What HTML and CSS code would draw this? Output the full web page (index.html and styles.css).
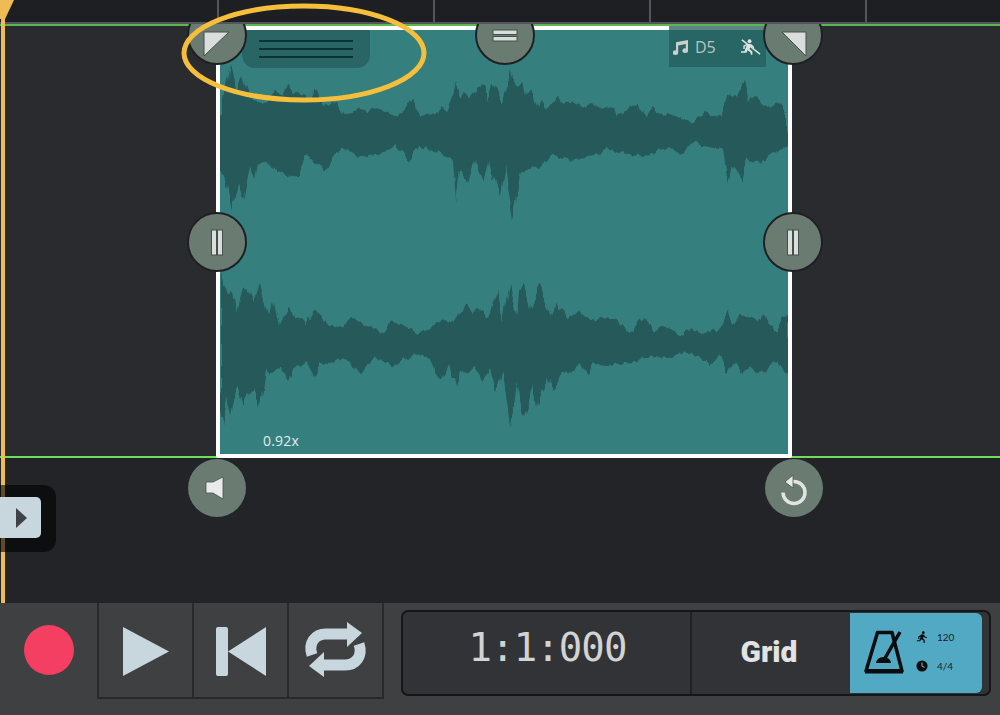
FILE: index.html
```html
<!DOCTYPE html>
<html lang="en">
  <head>
    <meta charset="UTF-8" />
    <meta name="viewport" content="width=device-width, initial-scale=1.0" />
    <title>Audio clip editor</title>
    <link rel="stylesheet" href="styles.css">
  </head>
  <body>
    <div class="stage">
      <div class="ruler">
        <div class="bar"></div>
        <div class="bar"></div>
        <div class="bar"></div>
        <div class="bar"></div>
      </div>

      <div class="tracks">
        <div class="lane">
          <div class="clip">
            <!-- waveform, coordinates are page pixels -->
            <svg class="wave" viewBox="220 30 568 425" preserveAspectRatio="none">
              <filter id="rough" x="0" y="0" width="1" height="1">
                <feTurbulence type="fractalNoise" baseFrequency="0.16 0.02" numOctaves="2" seed="4" />
                <feDisplacementMap in="SourceGraphic" scale="9" xChannelSelector="A" yChannelSelector="G" />
              </filter>
              <g filter="url(#rough)">
                <polygon points="220,97 225,93 230,63 237,93 243,75 250,98 265,105 275,92 282,95 287,82 293,95 303,93 310,102 316,88 323,105 337,102 343,115 360,108 367,113 377,108 387,112 397,118 412,100 420,115 437,113 441,104 447,113 455,83 460,98 465,93 470,100 478,87 485,87 488,103 493,83 503,103 510,67 517,88 523,82 526,97 532,88 537,108 542,100 547,110 558,97 563,105 570,102 575,103 585,108 590,104 600,107 613,108 617,117 632,105 638,104 645,117 652,107 662,115 672,113 690,122 708,113 720,118 727,95 737,97 743,78 748,100 757,95 763,108 780,103 788,118 788,147 773,153 760,163 748,160 743,183 733,165 728,183 723,150 707,147 690,142 683,155 667,147 647,157 637,155 617,153 607,147 600,155 570,160 553,155 537,167 520,173 513,223 505,163 500,197 490,163 485,182 475,162 468,182 460,170 456,203 453,160 437,153 420,146 408,162 395,145 383,153 370,155 357,157 345,148 337,153 325,170 313,163 307,153 298,175 288,177 277,173 270,163 258,162 255,178 250,167 243,200 238,185 232,213 225,175 220,170" />
                <polygon points="220,273 228,297 232,292 237,312 243,287 248,290 253,303 259,283 265,310 268,317 274,303 279,327 289,307 293,319 302,318 307,325 315,310 325,322 335,329 355,318 367,327 383,333 389,322 402,325 417,335 425,330 443,320 452,323 457,317 467,305 473,315 478,307 488,318 497,290 503,320 509,283 517,315 519,292 524,283 530,310 539,284 550,318 558,303 567,320 578,312 590,323 603,318 613,319 632,333 645,317 652,332 660,327 683,337 690,330 707,335 720,328 727,312 732,327 739,313 747,317 758,322 763,313 775,333 787,315 788,315 788,375 786,375 777,360 762,375 750,367 742,375 735,363 728,374 720,357 711,367 703,358 685,353 670,358 657,357 643,358 637,363 607,368 593,363 588,375 578,363 568,375 560,372 553,390 547,377 538,408 533,385 523,417 516,382 510,427 503,373 496,393 490,370 482,383 473,368 468,373 460,373 456,387 450,363 443,380 437,377 430,360 415,355 393,367 373,357 361,374 353,365 338,358 327,367 320,363 313,377 305,362 293,370 289,382 280,366 272,373 265,372 260,406 253,388 243,407 237,385 231,417 227,397 223,425 220,413" />
              </g>
            </svg>

            <div class="grip">
              <span></span>
              <span></span>
              <span></span>
            </div>

            <div class="tag">
              <svg class="note-icon" viewBox="2 0 16 16">
                <path d="M5 3.200 17 1v10.600a2.800 2.300 0 1 1-2.200-2.200V5L7.200 6.400v7.200a2.800 2.300 0 1 1-2.200-2.200z" />
              </svg>
              <span class="tag-name">D5</span>
              <svg class="nostretch-icon" viewBox="0 0 22 18">
                <circle cx="10" cy="3" r="2" />
                <path d="M8 5.500 12 6l3 3-1 1.200-3-2-1 3 3 2.500V17h-1.600l-.6-2.600-3-2-1 2.600H1v-1.500h3.600L7 7.500l-2 1V11H3.500V7.500z" />
                <path class="slash" d="M2 1.500 21 16.500" />
              </svg>
            </div>

            <div class="speed">0.92x</div>
          </div>
        </div>
        <div class="lane-empty"></div>

        <div class="handle top-left">
          <svg viewBox="0 0 60 60"><polygon class="ico" points="17,27 42,27 17,51" /></svg>
        </div>
        <div class="handle top-mid">
          <svg viewBox="0 0 60 60">
            <rect class="ico" x="18" y="25" width="24" height="4.500" />
            <rect class="ico" x="18" y="31.500" width="24" height="4.500" />
          </svg>
        </div>
        <div class="handle top-right">
          <svg viewBox="0 0 60 60"><polygon class="ico" points="19,27 43,27 43,51" /></svg>
        </div>
        <div class="handle mid-left">
          <svg viewBox="0 0 60 60">
            <rect class="ico" x="24.500" y="18" width="5" height="25" />
            <rect class="ico" x="30.500" y="18" width="5" height="25" />
          </svg>
        </div>
        <div class="handle mid-right">
          <svg viewBox="0 0 60 60">
            <rect class="ico" x="24.500" y="18" width="5" height="25" />
            <rect class="ico" x="30.500" y="18" width="5" height="25" />
          </svg>
        </div>
        <div class="handle plain bottom-left">
          <svg viewBox="0 0 58 58">
            <path class="white" d="M18 23h7l10-5v22l-10-6h-7z" />
          </svg>
        </div>
        <div class="handle plain bottom-right">
          <svg viewBox="0 0 58 58">
            <path class="undo" d="M27 22.500h2a11 11 0 1 1-11 11" />
            <polygon class="white" points="20,23 28,16 28,29" />
          </svg>
        </div>
      </div>

      <div class="playhead"></div>
      <svg class="circled" viewBox="0 0 250 104">
        <ellipse cx="125" cy="52" rx="120" ry="47" />
      </svg>
      <div class="drawer">
        <div class="drawer-btn"></div>
      </div>
    </div>

    <div class="transport">
      <div class="rec-wrap"><div class="rec"></div></div>
      <div class="buttons">
        <div class="tbtn">
          <svg viewBox="0 0 95 95"><polygon class="glyph" points="24,24 70,48.500 24,73" /></svg>
        </div>
        <div class="tbtn">
          <svg viewBox="0 0 95 95">
            <rect class="glyph" x="22" y="24" width="12" height="49" rx="2" />
            <polygon class="glyph" points="72,24 72,73 34,48.500" />
          </svg>
        </div>
        <div class="tbtn">
          <svg viewBox="0 0 95 95">
            <g>
              <path class="loop-line" d="M23 52c-4-12 3-21 14-21h22" />
              <polygon class="glyph" points="58,19 73,30 58,44" />
            </g>
            <g transform="rotate(180 46.500 46.500)">
              <path class="loop-line" d="M23 52c-4-12 3-21 14-21h22" />
              <polygon class="glyph" points="58,19 73,30 58,44" />
            </g>
          </svg>
        </div>
      </div>

      <div class="display">
        <div class="time">1:1:000</div>
        <div class="grid-btn">Grid</div>
        <div class="tempo">
          <svg class="metronome" viewBox="0 0 40 46">
            <path class="metro-line" d="M13.500 2.500H28L38 41H2z" />
            <path class="metro-line" d="M20.500 29 36 2" />
            <path class="metro-fill" d="M12 33a7.500 6 0 0 1 15 0z" />
            <path class="metro-fill" d="M1 39h38v4.500H1z" />
          </svg>
          <div class="tempo-info">
            <div class="tempo-row">
              <svg class="small-icon" viewBox="0 0 14 14">
                <circle cx="8.500" cy="2" r="1.600" />
                <path d="M6.500 3.800 9.500 4.500l1 2 2.500.8-.4 1.100-3-1-.6-1-.8 2.300 2 1.700V14h-1.400v-2.800L6 9.500 5 12H1v-1.300h3l1.500-4.200-1.500.7V9.300H2.700V6.300z" />
              </svg>
              <span>120</span>
            </div>
            <div class="tempo-row">
              <svg class="small-icon" viewBox="0 0 14 14">
                <path fill-rule="evenodd" d="M7 .5a6.500 6.500 0 1 0 0 13 6.500 6.500 0 0 0 0-13zM6.300 3h1.400v3.700l2.600 1.600-.7 1.100-3.300-2z" />
              </svg>
              <span>4/4</span>
            </div>
          </div>
        </div>
      </div>
    </div>
  </body>
</html>
```

FILE: styles.css
```css
* {
  box-sizing: border-box;
}

html,
body {
  margin: 0;
  height: 715px;
  overflow: hidden;
}

body {
  display: flex;
  flex-direction: column;
  background-color: #222428;
  font-family: "Lato", "Liberation Sans", sans-serif;
}

svg {
  display: block;
}

/* top part */
.stage {
  position: relative;
  height: 603px;
  flex: none;
}

.ruler {
  display: flex;
  height: 24px;
  padding-left: 217px;
  background-color: #1e1f23;
  border-bottom: 2px solid #54555a;
}

.bar {
  width: 216px;
  flex: none;
  border-left: 2px solid #54555a;
}

.bar:last-child {
  width: 135px;
}

.tracks {
  position: relative;
  height: 579px;
  overflow: hidden;
}

.lane {
  height: 434px;
  padding-left: 216px;
  background-color: #2a2b2f;
  border-top: 2px solid #5cb84e;
  border-bottom: 2px solid #6fdd5e;
}

.lane-empty {
  height: 145px;
  background-color: #222428;
}

.clip {
  position: relative;
  width: 576px;
  height: 432px;
  background-color: #35807f;
  border: 4px solid #fff;
  border-radius: 2px;
}

.wave {
  width: 568px;
  height: 424px;
}

.wave polygon {
  fill: #265a5a;
}

.grip {
  position: absolute;
  left: 22px;
  top: 0;
  display: flex;
  flex-direction: column;
  gap: 6px;
  width: 128px;
  height: 38px;
  padding: 10px 17px 0;
  background-color: #2a6566;
  border-radius: 0 0 13px 13px;
}

.grip span {
  height: 2px;
  background-color: #0d3335;
}

.tag {
  position: absolute;
  left: 449px;
  top: -4px;
  display: flex;
  align-items: center;
  width: 97px;
  height: 41px;
  padding-left: 4px;
  background-color: rgba(36, 92, 92, 0.75);
  color: #b9c4c1;
}

.note-icon {
  width: 16px;
  height: 16px;
  fill: #c9cfcc;
}

.tag-name {
  margin-left: 6px;
  font-family: "Open Sans", "Liberation Sans", sans-serif;
  font-size: 16px;
}

.nostretch-icon {
  width: 21px;
  height: 18px;
  margin-left: 24px;
  fill: #dfe3e0;
}

.nostretch-icon .slash {
  fill: none;
  stroke: #dfe3e0;
  stroke-width: 1.500;
}

.speed {
  position: absolute;
  left: 43px;
  bottom: 4px;
  font-family: "Open Sans", "Liberation Sans", sans-serif;
  font-size: 14px;
  letter-spacing: 0.200px;
  color: #e4eceb;
}

/* round handles on the clip */
.handle {
  position: absolute;
  width: 60px;
  height: 60px;
  background-color: #6a7b71;
  border: 2px solid #1f2024;
  border-radius: 50%;
}

.handle svg {
  width: 60px;
  height: 60px;
  margin: -2px;
}

.handle.plain {
  width: 58px;
  height: 58px;
  border: none;
}

.handle.plain svg {
  width: 58px;
  height: 58px;
  margin: 0;
}

.top-left {
  left: 187px;
  top: -19px;
}

.top-mid {
  left: 475px;
  top: -19px;
}

.top-right {
  left: 763px;
  top: -19px;
}

.mid-left {
  left: 187px;
  top: 188px;
}

.mid-right {
  left: 763px;
  top: 188px;
}

.bottom-left {
  left: 188px;
  top: 435px;
}

.bottom-right {
  left: 765px;
  top: 435px;
}

.ico {
  fill: #d9dddb;
  stroke: #45504a;
  stroke-width: 1;
}

.white {
  fill: #e8ebe9;
  stroke: #4a534e;
  stroke-width: 0.800;
}

.undo {
  fill: none;
  stroke: #e0e4e2;
  stroke-width: 3.500;
}

/* things lying over the tracks */
.playhead {
  position: absolute;
  left: 1px;
  top: 0;
  width: 4px;
  height: 603px;
  background-color: #f0bb55;
}

.playhead::before {
  content: "";
  position: absolute;
  left: -1px;
  top: 0;
  width: 14px;
  height: 19px;
  background-color: #f0bb55;
  clip-path: polygon(0 0, 100% 0, 36% 100%, 0 100%);
}

.circled {
  position: absolute;
  left: 179px;
  top: 1px;
  width: 250px;
  height: 104px;
}

.circled ellipse {
  fill: none;
  stroke: #f5bf3c;
  stroke-width: 5;
}

.drawer {
  position: absolute;
  left: 0;
  top: 485px;
  width: 56px;
  height: 67px;
  padding-top: 12px;
  background-color: rgba(0, 0, 0, 0.6);
  border-radius: 0 12px 12px 0;
}

.drawer-btn {
  position: relative;
  width: 41px;
  height: 41px;
  background-color: #c8d6dd;
  border-radius: 0 5px 5px 0;
}

.drawer-btn::after {
  content: "";
  position: absolute;
  left: 16px;
  top: 11px;
  border-left: 11px solid #3f4146;
  border-top: 10px solid transparent;
  border-bottom: 10px solid transparent;
}

/* bottom bar */
.transport {
  display: flex;
  flex: 1;
  background-color: #3f4042;
}

.rec-wrap {
  width: 97px;
  height: 95px;
  padding: 22px 0 0 24px;
}

.rec {
  width: 50px;
  height: 50px;
  background-color: #f43f63;
  border-radius: 50%;
}

.buttons {
  display: flex;
  height: 96px;
  border: solid #28292b;
  border-width: 0 2px 2px 2px;
}

.tbtn {
  width: 95px;
  height: 94px;
  border-right: 2px solid #28292b;
}

.tbtn:last-child {
  width: 93px;
  border-right: none;
}

.tbtn svg {
  width: 95px;
  height: 95px;
}

.glyph {
  fill: #c8d6dd;
}

.loop-line {
  fill: none;
  stroke: #c8d6dd;
  stroke-width: 11;
}

.display {
  display: flex;
  width: 590px;
  height: 86px;
  margin: 7px 0 0 17px;
  padding-right: 7px;
  background-color: #323336;
  border: 2px solid #151618;
  border-radius: 7px;
}

.time {
  width: 289px;
  border-right: 2px solid #202124;
  padding: 13px 0 0 2px;
  text-align: center;
  font-family: "DejaVu Sans Mono", "Liberation Mono", monospace;
  font-size: 39px;
  letter-spacing: -0.900px;
  line-height: 46px;
  color: #d2d3d3;
}

.grid-btn {
  width: 158px;
  padding: 22px 4px 0 0;
  text-align: center;
  font-family: "Roboto", "Liberation Sans", sans-serif;
  font-size: 30px;
  font-weight: 900;
  line-height: 36px;
  color: #e3e3e3;
}

.tempo {
  display: flex;
  align-items: center;
  flex: 1;
  margin: 1px 0;
  padding-left: 14px;
  background-color: #52a9c3;
  border-radius: 0 6px 6px 0;
}

.metronome {
  width: 40px;
  height: 46px;
}

.metro-line {
  fill: none;
  stroke: #0a0c0e;
  stroke-width: 3.500;
  stroke-linejoin: round;
}

.metro-fill {
  fill: #0a0c0e;
}

.tempo-info {
  display: flex;
  flex-direction: column;
  gap: 17px;
  margin: 0 0 4px 12px;
}

.tempo-row {
  display: flex;
  align-items: center;
  gap: 9px;
  font-size: 10px;
  color: #1a2428;
}

.small-icon {
  width: 12px;
  height: 12px;
  fill: #0a0c0e;
}
```
